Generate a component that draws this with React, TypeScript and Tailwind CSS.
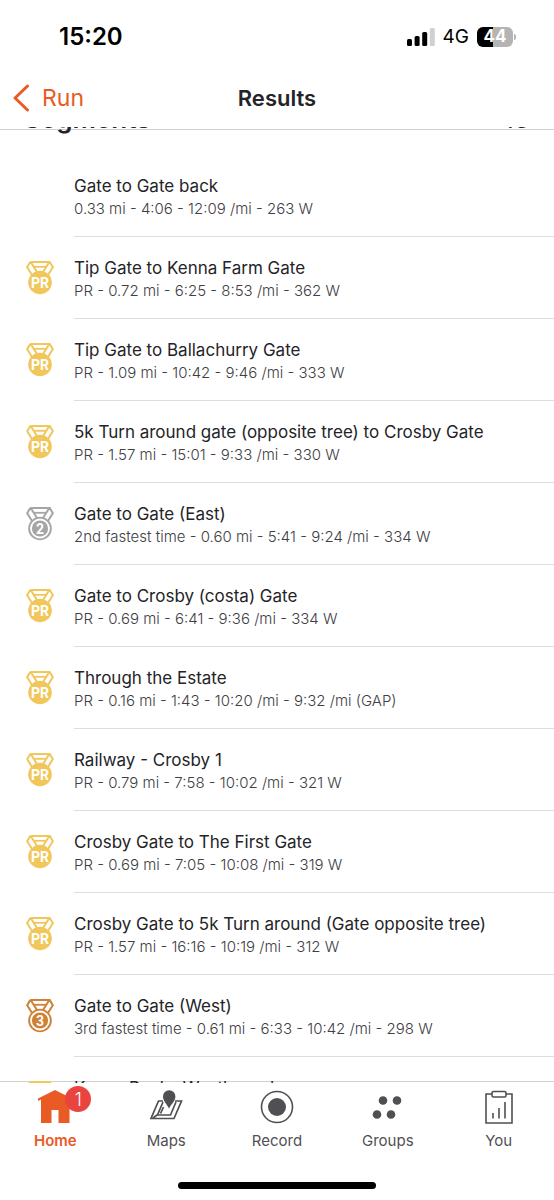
import { useState } from "react";

type Medal = "pr" | "second" | "third";

type Segment = {
  name: string;
  details: string;
  medal?: Medal;
};

const segments: Segment[] = [
  { name: "Gate to Gate back", details: "0.33 mi - 4:06 - 12:09 /mi - 263 W" },
  {
    name: "Tip Gate to Kenna Farm Gate",
    details: "PR - 0.72 mi - 6:25 - 8:53 /mi - 362 W",
    medal: "pr",
  },
  {
    name: "Tip Gate to Ballachurry Gate",
    details: "PR - 1.09 mi - 10:42 - 9:46 /mi - 333 W",
    medal: "pr",
  },
  {
    name: "5k Turn around gate (opposite tree) to Crosby Gate",
    details: "PR - 1.57 mi - 15:01 - 9:33 /mi - 330 W",
    medal: "pr",
  },
  {
    name: "Gate to Gate (East)",
    details: "2nd fastest time - 0.60 mi - 5:41 - 9:24 /mi - 334 W",
    medal: "second",
  },
  {
    name: "Gate to Crosby (costa) Gate",
    details: "PR - 0.69 mi - 6:41 - 9:36 /mi - 334 W",
    medal: "pr",
  },
  {
    name: "Through the Estate",
    details: "PR - 0.16 mi - 1:43 - 10:20 /mi - 9:32 /mi (GAP)",
    medal: "pr",
  },
  {
    name: "Railway - Crosby 1",
    details: "PR - 0.79 mi - 7:58 - 10:02 /mi - 321 W",
    medal: "pr",
  },
  {
    name: "Crosby Gate to The First Gate",
    details: "PR - 0.69 mi - 7:05 - 10:08 /mi - 319 W",
    medal: "pr",
  },
  {
    name: "Crosby Gate to 5k Turn around (Gate opposite tree)",
    details: "PR - 1.57 mi - 16:16 - 10:19 /mi - 312 W",
    medal: "pr",
  },
  {
    name: "Gate to Gate (West)",
    details: "3rd fastest time - 0.61 mi - 6:33 - 10:42 /mi - 298 W",
    medal: "third",
  },
  { name: "Kenna Rocks Westbound", details: "", medal: "pr" },
];

function MedalIcon({ medal }: { medal: Medal }) {
  const color =
    medal === "pr" ? "#f1c65b" : medal === "second" ? "#a5a5a5" : "#cf8135";
  return (
    <svg width="28" height="36" viewBox="0 0 28 36" fill="none">
      <path
        d="M4.2 2h19.6l3 5.200-5 8M4.200 2l-3 5.200 5 8M5 2.500l6 9.500M23 2.500l-6 9.500"
        stroke={color}
        strokeWidth="2"
      />
      <path d="M7.500 6.800h13" stroke={color} strokeWidth="1.800" />
      <circle cx="14" cy="22.500" r="11.800" fill={color} />
      {medal !== "pr" && (
        <circle cx="14" cy="22.500" r="9" stroke="#fff" strokeWidth="1.800" />
      )}
      <text
        x="14"
        y="27.500"
        textAnchor="middle"
        fill="#fff"
        fontFamily="Roboto, sans-serif"
        fontWeight="700"
        fontSize="14"
      >
        {medal === "pr" ? "PR" : medal === "second" ? "2" : "3"}
      </text>
    </svg>
  );
}

function SegmentRow({ segment }: { segment: Segment }) {
  return (
    <li className="flex h-[82px] shrink-0">
      <div className="flex w-[74px] shrink-0 pt-[23px] pl-[26px]">
        {segment.medal && <MedalIcon medal={segment.medal} />}
      </div>
      <div className="min-w-0 flex-1 border-b border-[#dedede] pt-[19px]">
        <p className="truncate text-[17px] leading-6 text-[#242428]">
          {segment.name}
        </p>
        <p className="truncate text-[15px] leading-[22px] font-light text-[#404044]">
          {segment.details}
        </p>
      </div>
    </li>
  );
}

function StatusBar() {
  return (
    <div className="flex h-[73px] items-center justify-between pr-[38px] pl-[59px] text-black">
      <span className="text-[24px] leading-8 font-semibold">15:20</span>
      <div className="flex items-center">
        <svg width="28" height="18" viewBox="0 0 28 18">
          <rect x="0" y="11" width="5" height="7" rx="1.5" />
          <rect x="7.6" y="8" width="5" height="10" rx="1.5" />
          <rect x="15.2" y="4" width="5" height="14" rx="1.5" />
          <rect x="22.8" y="0" width="5" height="18" rx="1.5" fill="#d0d0d0" />
        </svg>
        <span className="ml-2 text-[19px] leading-6">4G</span>
        <div className="ml-2 flex h-5 w-9 items-center justify-center rounded-md bg-linear-to-r from-black from-45% to-[#b4b4b4] to-45% text-[17px] font-bold text-white">
          44
        </div>
        <div className="ml-px h-[6px] w-[2px] rounded-r bg-[#b4b4b4]" />
      </div>
    </div>
  );
}

function HomeIcon() {
  return (
    <svg width="36" height="36" viewBox="0 0 36 36" fill="currentColor">
      <path d="M18 1 35 9.500v2.500h-2.500V34H21.500V21h-7V34H4V10.500L1 12V9.500z" />
    </svg>
  );
}

function MapsIcon() {
  return (
    <svg width="36" height="36" viewBox="0 0 36 36" fill="none">
      <path
        d="M15 12H10.500L3 29.500H26L33.500 12H27"
        stroke="currentColor"
        strokeWidth="1.700"
      />
      <path
        d="M15 13 9.500 26H22.500L28 13M9 26l-4 3M15.500 18l-3 6.500"
        stroke="currentColor"
        strokeWidth="1.700"
      />
      <path
        d="M21 19.500c-2-4.500-6-7-6-12a6.200 6.200 0 0 1 12.400 0c0 5-4.400 7.500-6.400 12z"
        fill="currentColor"
      />
    </svg>
  );
}

function RecordIcon() {
  return (
    <svg width="36" height="36" viewBox="0 0 36 36" fill="none">
      <circle cx="18" cy="18" r="15.500" stroke="currentColor" strokeWidth="1.600" />
      <circle cx="18" cy="18" r="9" fill="currentColor" />
    </svg>
  );
}

function GroupsIcon() {
  return (
    <svg width="36" height="36" viewBox="0 0 36 36" fill="currentColor">
      <circle cx="13" cy="11.500" r="4.300" />
      <circle cx="27" cy="11.500" r="4.300" />
      <circle cx="7" cy="25.500" r="4.300" />
      <circle cx="21" cy="25.500" r="4.300" />
    </svg>
  );
}

function YouIcon() {
  return (
    <svg width="36" height="36" viewBox="0 0 36 36" fill="none">
      <path
        d="M11 5H5v29h26V5h-6M12 29.500v-5.500M18 29.500V19M24 29.500V13"
        stroke="currentColor"
        strokeWidth="1.600"
      />
      <rect x="11" y="2.500" width="14" height="5.500" rx="1.500" stroke="currentColor" strokeWidth="1.600" />
    </svg>
  );
}

const tabs = [
  { label: "Home", Icon: HomeIcon, badge: 1 },
  { label: "Maps", Icon: MapsIcon },
  { label: "Record", Icon: RecordIcon },
  { label: "Groups", Icon: GroupsIcon },
  { label: "You", Icon: YouIcon },
];

function TabBar() {
  const [active, setActive] = useState("Home");
  return (
    <nav className="grid h-[99px] grid-cols-5 bg-white pt-[6px]">
      {tabs.map(({ label, Icon, badge }) => (
        <button
          key={label}
          onClick={() => setActive(label)}
          className={
            active === label
              ? "flex flex-col items-center font-semibold text-[#ea5a24]"
              : "flex flex-col items-center text-[#505054]"
          }
        >
          <span className="relative">
            <Icon />
            {badge && (
              <span className="absolute -top-[3px] -right-[18px] flex size-[26px] items-center justify-center rounded-full bg-[#e9443f] text-[18px] font-light text-white">
                {badge}
              </span>
            )}
          </span>
          <span className="mt-1 text-[15px] leading-6">{label}</span>
        </button>
      ))}
    </nav>
  );
}

export default function App() {
  return (
    <div className="flex h-screen flex-col bg-white font-[Inter,sans-serif]">
      <StatusBar />
      <header className="grid h-[54px] grid-cols-3 items-center pb-1">
        <button className="flex items-center pl-3 text-[23px] leading-8 text-[#ea5a24]">
          <svg width="18" height="28" viewBox="0 0 18 28" fill="none" className="mr-3">
            <path
              d="M15.500 2 3 14l12.500 12"
              stroke="currentColor"
              strokeWidth="3"
              strokeLinecap="round"
              strokeLinejoin="round"
            />
          </svg>
          Run
        </button>
        <h1 className="text-center text-[22px] leading-8 font-semibold text-[#242428]">
          Results
        </h1>
      </header>
      <main className="relative min-h-0 flex-1 overflow-hidden">
        <div className="absolute inset-x-0 top-[2px] h-px bg-[#d0d0d0]" />
        <div className="absolute inset-x-0 bottom-px h-px bg-[#d0d0d0]" />
        <div className="relative -mt-6 mb-5 flex h-8 items-baseline justify-between px-6 text-[26px] leading-8 font-semibold text-[#242428]">
          <h2>Segments</h2>
          <span className="text-[26px] font-normal">13</span>
        </div>
        <ul className="relative">
          {segments.map((segment) => (
            <SegmentRow key={segment.name} segment={segment} />
          ))}
        </ul>
      </main>
      <TabBar />
      <div className="flex h-[18px] justify-center">
        <div className="h-[7px] w-[198px] rounded-full bg-black" />
      </div>
    </div>
  );
}
